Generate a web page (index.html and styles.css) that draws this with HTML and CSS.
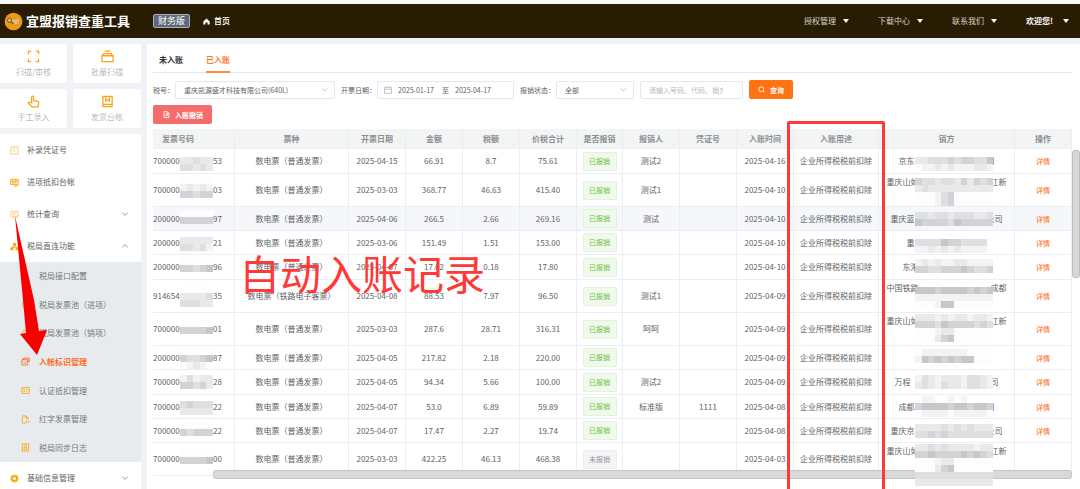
FILE: index.html
```html
<!DOCTYPE html>
<html lang="zh-CN">
<head>
<meta charset="utf-8">
<title>宜盟报销查重工具</title>
<link rel="stylesheet" href="styles.css">
</head>
<body>
<div class="app">
  <header class="topbar">
    <svg class="logo" viewBox="0 0 20 20"><circle cx="10" cy="10" r="9.3" fill="#f39a14"/><rect x="7" y="6.5" width="9.5" height="7" rx="1" fill="#e8a94a" stroke="#c98a3a" stroke-width=".6"/><path d="M7 9.5h9M10 13.5l2-2 2 1" stroke="#f7cf8e" fill="none"/><circle cx="5.8" cy="8.6" r="2.2" fill="#f3b45a" stroke="#4c5a48" stroke-width="1"/><path d="M7.5 10.3l2.6 2.4" stroke="#4c5a48" stroke-width="1.2"/></svg>
    <h1 class="brand">宜盟报销查重工具</h1>
    <span class="edition">财务版</span>
    <a class="home" href="#"><svg viewBox="0 0 8 8"><path d="M4 .6L.4 4v3.4h2.4V5h2.4v2.4h2.4V4z" fill="#fff"/></svg>首页</a>
    <nav class="topnav">
      <a href="#">授权管理<i class="caret"></i></a>
      <a href="#">下载中心<i class="caret"></i></a>
      <a href="#">联系我们<i class="caret"></i></a>
      <a class="user" href="#">欢迎您!<i class="caret"></i></a>
    </nav>
  </header>

  <div class="body">
    <aside class="sidebar">
      <div class="shortcuts">
        <a href="#"><svg viewBox="0 0 14 14"><path d="M1.5 4.5v-3h3M9.500 1.500h3v3M12.500 9.500v3h-3M4.500 12.500h-3v-3"/></svg>扫描/审核</a>
        <a href="#"><svg viewBox="0 0 14 14"><path d="M1 6.200h12v6.300H1zM2 6l1-2.200h8L12 6M4 1.300h6"/></svg>批量扫描</a>
        <a href="#"><svg viewBox="0 0 14 14"><path d="M5 8.500V2.300a1.100 1.100 0 0 1 2.200 0V6l4.300 1c1 .2 1.200.8 1.100 1.600L12 12.700H5.400L1.600 9c-.5-.8.5-1.600 1.300-1.200z"/></svg>手工录入</a>
        <a href="#"><svg viewBox="0 0 14 14"><path d="M2 1.500h10v11H2zM2 10h10M5 1.500v5l2-1.300 2 1.300v-5"/></svg>发票台帐</a>
      </div>
      <nav class="menu">
        <a href="#"><svg class="faint" viewBox="0 0 10 10"><path d="M1 1h8v8H1zM3 5l1.500 1.500L7 4M3.500 2.700h2"/></svg>补录凭证号</a>
        <a href="#"><svg viewBox="0 0 10 10"><path d="M.8 1.500h8.400v5.800H.8zM.8 3.600h8.400M3.200 1.500v5.800M6.400 1.500v3M5 9h4M5 9l1.200-1M3 5.500h5"/></svg>进项抵扣台帐</a>
        <a href="#"><svg class="faint" viewBox="0 0 10 10"><path d="M1 1.500h8v5.500H1zM2.800 3.200h4.500M2.800 5h2.500M2.500 8.800h5M7 6l1.500 2"/></svg>统计查询<svg class="chev" viewBox="0 0 8 8"><path d="M1.300 2.800L4 5.300l2.700-2.500"/></svg></a>
        <a href="#"><svg class="solid" viewBox="0 0 10 10"><path d="M3.300 1h3.400v3.200h-1v.8H8v1h1.700v3.200H6.200V6H7 3h.8v3.200H.3V6H2V5h2.400v-.8H3.300z"/></svg>税局直连功能<svg class="chev" viewBox="0 0 8 8"><path d="M1.300 5.200L4 2.700l2.700 2.500"/></svg></a>
        <div class="submenu">
          <a href="#"><svg class="solid" viewBox="0 0 10 10"><circle cx="5" cy="5" r="3"/></svg>税局接口配置</a>
          <a href="#"><svg viewBox="0 0 10 10"><path d="M3 1.500L1 5l2 3.500h5v-7z"/></svg>税局发票池（进项）</a>
          <a href="#"><svg viewBox="0 0 10 10"><path d="M3 1.500L1 5l2 3.500h5v-7z"/></svg>税局发票池（销项）</a>
          <a class="current" href="#"><svg viewBox="0 0 10 10"><path d="M1 3h6.500v5.800H1zM2.700 3V1.200h6.500V5H7.500M2.600 5.500l1.500 1.600L6.300 5"/></svg>入帐标识管理</a>
          <a href="#"><svg viewBox="0 0 10 10"><path d="M.8 1.800h8.400v6.400H.8zM2.500 3.800h2M2.500 6h2M6 4l1.800 2M7.800 4L6 6"/></svg>认证抵扣管理</a>
          <a href="#"><svg viewBox="0 0 10 10"><path d="M5 9H1.500V1h4L8 3.500V5M5.500 1v2.500H8M6 9V6.300M8.500 9V6.300"/></svg>红字发票管理</a>
          <a href="#"><svg viewBox="0 0 10 10"><path d="M1.500 1h7v8h-7zM3 3h4M3.500 5h3v2h-3z"/></svg>税局同步日志</a>
        </div>
        <a href="#"><svg class="gear" viewBox="0 0 10 10"><circle cx="5" cy="5" r="2.700"/><path d="M5 .5v1.200M5 8.300v1.200M.5 5h1.200M8.300 5h1.200M1.800 1.800l.9.9M7.300 7.300l.9.9M1.800 8.200l.9-.9M7.300 2.700l.9-.9"/></svg>基础信息管理<svg class="chev" viewBox="0 0 8 8"><path d="M1.300 2.800L4 5.300l2.700-2.500"/></svg></a>
      </nav>
      <svg class="arrow" viewBox="0 0 32 141"><path d="M0 0L19 84l5 31 8-1L22 139 5 118l6-1L8 84z" fill="#f60000"/></svg>
    </aside>

    <main class="main">
      <nav class="tabs">
        <a href="#">未入账</a>
        <a class="on" href="#">已入账</a>
      </nav>
      <form class="filters">
        <label for="tax">税号：</label>
        <span class="pick pick-tax"><select id="tax"><option>重庆凯源盛才科技有限公司(640L)</option></select><svg viewBox="0 0 8 8"><path d="M1 2.500L4 5.700l3-3.200"/></svg></span>
        <label for="from">开票日期：</label>
        <span class="range"><svg viewBox="0 0 8 8"><path d="M.5 1.300h7v6h-7zM.5 3.200h7M2.500.4v1.400M5.500.4v1.400"/></svg><input id="from" type="text" value="2025-01-17"><span>至</span><input aria-label="结束日期" type="text" value="2025-04-17"></span>
        <label for="state">报销状态：</label>
        <span class="pick pick-state"><select id="state"><option>全部</option></select><svg viewBox="0 0 8 8"><path d="M1 2.500L4 5.700l3-3.200"/></svg></span>
        <input class="search" type="text" aria-label="关键字" placeholder="请输入号码、代码、销方">
        <button class="btn query" type="button"><svg viewBox="0 0 8 8"><circle cx="3.800" cy="3.700" r="2.800"/><path d="M5.800 5.800l1.500 1.500"/></svg>查询</button>
      </form>
      <div class="actions">
        <button class="btn revoke" type="button"><svg viewBox="0 0 8 8"><path d="M1.200.7h3.600l2 2v4.800H1.200zM4.600.7v2.200h2.200M2.800 6l2-2M3 4h1.800v1.800"/></svg>入账撤销</button>
      </div>

      <div class="grid">
        <table>
          <colgroup><col class="w-no"><col class="w-kind"><col class="w-m"><col class="w-m"><col class="w-m"><col class="w-m"><col class="w-tag"><col class="w-m"><col class="w-m"><col class="w-m"><col class="w-use"><col><col class="w-m"></colgroup>
          <thead><tr><th class="no">发票号码</th><th>票种</th><th>开票日期</th><th>金额</th><th>税额</th><th>价税合计</th><th>是否报销</th><th>报销人</th><th>凭证号</th><th>入账时间</th><th>入账用途</th><th>销方</th><th>操作</th></tr></thead>
          <tbody id="rows"></tbody>
        </table>
        <div class="bar-x"></div>
        <div class="bar-y"></div>
        <div class="frame"></div>
        <div class="note">自动入账记录</div>
      </div>
    </main>
  </div>
</div>
<script src="app.js"></script>
</body>
</html>
```
FILE: styles.css
```css
* { box-sizing: border-box; }
body {
  margin: 0;
  background: #f0f2f6;
  color: #606266;
  font: 8px/16px "Noto Sans CJK SC", "Noto Sans", sans-serif;
}
a { color: inherit; text-decoration: none; }
svg { display: block; flex: none; fill: none; stroke: currentColor; overflow: visible; }
.app { display: flex; flex-direction: column; height: 100vh; overflow: hidden; }

.topbar {
  display: flex;
  align-items: center;
  flex: none;
  height: 38px;
  padding: 0 11px 0 4px;
  border-top: 4px solid #f8f8f8;
  background: #281c02;
  color: #fff;
}
.logo { width: 19px; height: 19px; stroke: none; }
.brand { margin: 0 23px 0 3px; font-size: 13px; line-height: 20px; font-weight: 700; }
.edition {
  padding: 0 4px;
  border: 1px solid #a9b0bb;
  border-radius: 2px;
  background: #5d6878;
  font-size: 9px;
  line-height: 12px;
}
.home { display: flex; align-items: center; gap: 4px; margin-left: 13px; font-weight: 500; }
.home svg { width: 7px; height: 7px; stroke: none; }
.topnav { display: flex; gap: 29px; margin-left: auto; color: #d6d2c8; }
.topnav a { display: flex; align-items: center; gap: 7px; }
.topnav .user { gap: 10px; color: #fff; font-weight: 700; }
.caret { border: 3px solid transparent; border-top: 4px solid #fff; border-bottom: 0; }

.body { display: flex; gap: 6px; flex: 1; min-height: 0; padding-top: 6px; }
.sidebar { position: relative; flex: none; width: 141px; }
.shortcuts { display: grid; grid-template-columns: 67px 1fr; gap: 6px; color: #97999e; font-weight: 300; }
.shortcuts a {
  display: flex;
  flex-direction: column;
  align-items: center;
  gap: 1px;
  height: 39px;
  padding-top: 6px;
  border-radius: 2px;
  background: #fff;
}
.shortcuts svg { width: 13px; height: 13px; color: #ffa21a; stroke-width: 1.4; }
.menu { margin-top: 6px; background: #fff; }
.menu a { display: flex; align-items: center; gap: 8px; height: 32px; padding: 0 12px 0 10px; }
.menu svg { width: 9px; height: 9px; color: #faa61a; stroke-width: 1; }
.menu .solid { fill: currentColor; stroke: none; }
.menu .faint { opacity: .6; }
.menu .gear { stroke-width: 2; color: #ffa400; }
.menu .chev { width: 8px; height: 8px; margin-left: auto; color: #9a9ca1; }
.submenu { display: grid; grid-auto-rows: 1fr; min-height: 200px; background: #e8ebee; }
.submenu a { gap: 9px; height: auto; padding-left: 21px; color: #73767c; }
.submenu .current, .submenu .current svg { color: #ff6a1c; font-weight: 700; }
.arrow { position: absolute; left: 15px; top: 172px; width: 32px; height: 141px; stroke: none; }

.main { flex: 1; min-width: 0; padding: 0 8px 0 6px; background: #fff; }
.tabs { display: flex; gap: 23px; height: 29px; padding: 0 6px; border-bottom: 1px solid #e4e7ed; font-weight: 700; color: #303133; }
.tabs a { padding-top: 8px; }
.tabs .on { height: 29px; border-bottom: 2px solid #ff8a3c; color: #ff7a2e; }
.filters { display: flex; align-items: center; height: 19px; margin-top: 7px; font-size: 7px; }
.filters label { margin-right: 1px; flex: none; white-space: nowrap; }
.filters input, .filters select, .btn { font: inherit; color: inherit; }
.pick, .range, .search { height: 18px; border: 1px solid #e4e7ed; border-radius: 2px; background: #fff; }
.pick { display: flex; align-items: center; padding-right: 6px; margin-right: 6px; }
.pick select { flex: 1; min-width: 0; padding: 0 0 0 8px; border: 0; background: none; appearance: none; outline: 0; }
.pick svg { width: 7px; height: 7px; color: #c0c4cc; stroke-width: 1; }
.pick-tax { width: 160px; }
.pick-state { width: 78px; }
.range { display: flex; align-items: center; gap: 6px; width: 137px; margin-right: 6px; padding-left: 6px; }
.range svg { width: 8px; height: 8px; color: #c0c4cc; stroke-width: 1; }
.range input { width: 38px; padding: 0; border: 0; background: none; }
.filters .search { width: 103px; margin-right: 6px; padding: 0 19px 0 8px; }
.search::placeholder { color: #b4b8c0; }
.filters .btn, .actions .btn {
  display: flex;
  align-items: center;
  gap: 5px;
  height: 19px;
  border: 0;
  border-radius: 2px;
  color: #fff;
  font-size: 7px;
  font-weight: 700;
}
.btn svg { width: 7px; height: 7px; stroke-width: 1; }
.query { padding: 0 9px; background: #ff7313; }
.revoke { padding: 0 9px 0 10px; background: #f56c6c; }
.actions { display: flex; margin-top: 6px; }

.grid { position: relative; margin-top: 5px; padding-bottom: 3px; }
table { width: 100%; border-collapse: separate; border-spacing: 0; table-layout: fixed; text-align: center; }
.w-no { width: 82px; }
.w-kind { width: 114px; }
.w-m { width: 57px; }
.w-tag { width: 46px; }
.w-use { width: 85px; }
th, td { padding: 0; border-right: 1px solid #ebeef5; border-bottom: 1px solid #ebeef5; white-space: pre; }
th { height: 20px; background: #f3f5f4; color: #8b8e94; font-weight: 700; line-height: 16px; }
th.no { padding-right: 31px; }
td { height: 24px; }
tr:nth-child(4n+1) td { height: 25px; }
tr.tall td { height: 33px; }
tr.hover td { background: #f5f7fa; }
.num { display: flex; justify-content: flex-end; overflow: hidden; padding-right: 12px; }
.gap { flex: none; width: 29px; }
td.seller, td.no { position: relative; }
.mosaic { position: absolute; display: grid; grid-auto-rows: 7px; z-index: 1; }
.no .mosaic { left: 27px; width: 33px; grid-template-columns: repeat(5, 1fr); }
.seller .mosaic { left: 36px; width: 78px; grid-template-columns: repeat(12, 1fr); }
.m0 { background: #fdfdfd; }
.m1 { background: #f3f3f4; }
.m2 { background: #e9e9ea; }
.m3 { background: #dedfe1; }
.m4 { background: #d2d3d6; }
.m5 { background: #c6c7c9; }
.tag {
  display: block;
  width: 34px;
  height: 19px;
  margin: 0 auto;
  border: 1px solid #e1f3d8;
  border-radius: 2px;
  background: #f0f9eb;
  color: #67c23a;
  font-size: 7px;
  line-height: 16px;
}
.tag.off { border-color: #ededef; background: #f4f4f5; color: #909399; }
.detail { color: #ff7a2e; font-size: 7px; font-weight: 500; }
.bar-x { position: absolute; left: 60px; right: 0; bottom: 0; height: 9px; border: 1px solid #c4c4c4; border-radius: 3px; background: #d9d9d9; }
.bar-y { position: absolute; right: -8px; top: 21px; width: 8px; height: 128px; border: 1px solid #bdbdbd; border-radius: 3px; background: #d6d6d6; }
.frame { position: absolute; left: 634px; top: -8px; width: 98px; height: 400px; border: 3px solid #ff3838; border-radius: 2px; }
.note { position: absolute; left: 86px; top: 115px; color: #ff3838; font-size: 41px; line-height: 56px; white-space: nowrap; }
```
FILE: app.js
```js
const S = n => '　'.repeat(n);
const common = '数电票（普通发票）';
// number prefix, number suffix, kind, date, amount, tax, total, person, voucher, booked, seller, tall,
// number mosaic [top, rows], seller mosaic [top, rows]
const rows = [
  ['7000000', '53', common, '2025-04-15', '66.91', '8.7', '75.61', '测试2', '', '2025-04-16', '京东' + S(9) + '司', 0, [8, '22322', '33232'], [8, '223334344335', '011212111221']],
  ['7000000', '03', common, '2025-03-03', '368.77', '46.63', '415.40', '测试1', '', '2025-04-10', '重庆山如' + S(9) + '江新\n', 1, [3, '00000', '12121', '44344'], [4, '433233242434', '232222222222', '000134000000', '000134000000']],
  ['2000000', '97', common, '2025-04-06', '266.5', '2.66', '269.16', '测试', '', '2025-04-10', '重庆蓝' + S(9) + '公司', 0, [3, '00000', '44444'], [5, '332332333223', '544443544444']],
  ['2000000', '21', common, '2025-03-06', '151.49', '1.51', '153.00', '', '', '2025-04-10', '重' + S(9), 0, [6, '22222', '33231'], [8, '333354433330', '112121211110']],
  ['2000000', '96', common, '2025-04-07', '17.62', '0.18', '17.80', '', '', '2025-04-10', '东港' + S(9), 0, [3, '00000', '44345'], [4, '121211221111', '443344454334']],
  ['9146543', '35', '数电票（铁路电子客票）', '2025-04-08', '88.53', '7.97', '96.50', '测试1', '', '2025-04-09', '中国铁路' + S(9) + '成都\n', 1, [6, '00000', '22223', '33322'], [7, '555455554545', '111111111111', '000155000000']],
  ['7000000', '01', common, '2025-03-03', '287.6', '28.71', '316.31', '呵呵', '', '2025-04-09', '重庆山如' + S(9) + '江新\n', 1, [7, '00000', '44445'], [1, '222121221221', '444354444343', '000122000000', '000245000000']],
  ['2000000', '87', common, '2025-04-05', '217.82', '2.18', '220.00', '', '', '2025-04-09', '', 0, [2, '00000', '43345', '01210'], [3, '011111110000', '154545455000']],
  ['7000000', '28', common, '2025-04-05', '94.34', '5.66', '100.00', '测试2', '', '2025-04-09', '万程' + S(10) + '司', 0, [5, '13122', '44342'], [5, '132122213321', '232132213321']],
  ['7000000', '22', common, '2025-04-07', '53.0', '6.89', '59.89', '标准版', '1111', '2025-04-08', '成都' + S(9) + '司', 0, [6, '34333', '22222'], [1, '011001010000', '455554554554', '011110111110']],
  ['7000000', '22', common, '2025-04-07', '17.47', '2.27', '19.74', '', '', '2025-04-08', '重庆京' + S(9) + '公司', 0, [3, '00000', '43444'], [5, '222232323222', '334343333333']],
  ['7000000', '00', common, '2025-03-03', '422.25', '46.13', '468.38', '', '', '2025-04-03', '重庆山如' + S(9) + '江新\n', 1, [7, '00000', '44445'], [1, '223232222122', '445444454543', '000122000000', '000245000000', '333333333333', '222222222222']]
];
const mosaic = ([top, ...lines]) =>
  `<div class="mosaic" style="top:${top}px">${lines.join('').split('').map(c => `<i class="m${c}"></i>`).join('')}</div>`;

document.getElementById('rows').innerHTML = rows.map((r, i) => {
  const [pre, suf, kind, date, amount, tax, total, person, voucher, booked, seller, tall, m1, m2] = r;
  const last = i === rows.length - 1;
  const cls = (tall ? 'tall ' : '') + (i === 2 ? 'hover' : '');
  const name = tall ? seller + '　' : seller;
  return `<tr class="${cls}"><td class="no"><div class="num"><span>${pre}</span><span class="gap"></span><span>${suf}</span></div>${mosaic(m1)}</td>` +
    [kind, date, amount, tax, total].map(t => `<td>${t}</td>`).join('') +
    `<td><span class="tag ${last ? 'off' : ''}">${last ? '未报销' : '已报销'}</span></td>` +
    [person, voucher, booked, '企业所得税税前扣除'].map(t => `<td>${t}</td>`).join('') +
    `<td class="seller">${name}${mosaic(m2)}</td><td>${last ? '' : '<a class="detail" href="#">详情</a>'}</td></tr>`;
}).join('');
```
